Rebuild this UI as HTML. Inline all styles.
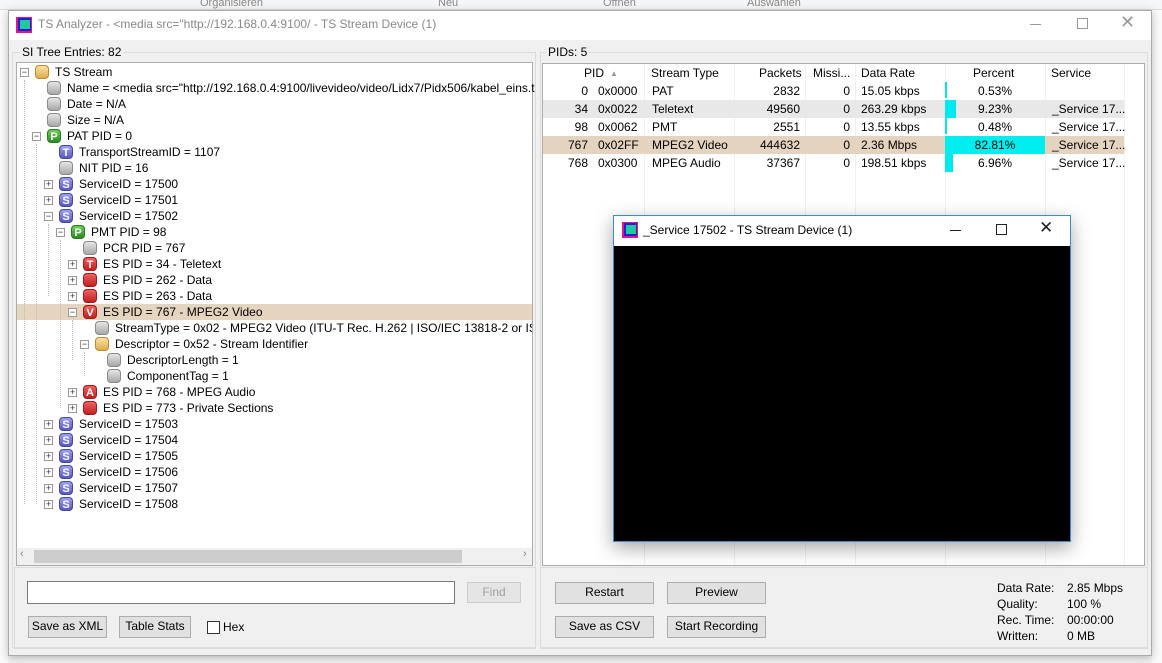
<!DOCTYPE html>
<html><head><meta charset="utf-8">
<style>
*{box-sizing:border-box;margin:0;padding:0}
body{width:1162px;height:663px;overflow:hidden;position:relative;background:#f3f3f3;font-family:"Liberation Sans",sans-serif;font-size:12px;color:#000}
.a{position:absolute}
.r{position:absolute;height:16px;line-height:16px;white-space:nowrap}
.r .e{position:absolute;left:0;top:4px;width:9px;height:9px;border:1px solid #999;background:#fff;font-size:9px;line-height:7px;text-align:center;color:#333}
.r .i{position:absolute;left:15px;top:1px;width:14px;height:14px;border-radius:4px;color:#fff;font-weight:bold;font-size:11px;line-height:14px;text-align:center}
.r .t{position:absolute;left:35px;top:0}
.g{background:linear-gradient(#e6e6e6,#a8a8a8);border:1px solid #888}
.y{background:linear-gradient(#fbe2a6,#e0ac4c);border:1px solid #b88a30}
.p{background:linear-gradient(#6ed05a,#2d8c20);border:1px solid #2a7a20}
.s{background:linear-gradient(#a0a0f0,#5858c0);border:1px solid #4848a0}
.d{background:linear-gradient(#f06060,#c02020);border:1px solid #a01818}
.btn{position:absolute;background:#e1e1e1;border:1px solid #adadad;text-align:center;line-height:19px;font-size:12px}
.hd{position:absolute;top:64px;height:18px;line-height:18px;font-size:12px}
.c{position:absolute;height:18px;line-height:18px}
</style></head><body>
<div class="a" style="left:0;top:0;width:1162px;height:10px;background:#f5f6f7;border-bottom:1px solid #ddd"></div>
<div class="a" style="left:200px;top:-3px;color:#888;font-size:11px">Organisieren</div>
<div class="a" style="left:438px;top:-3px;color:#888;font-size:11px">Neu</div>
<div class="a" style="left:603px;top:-3px;color:#888;font-size:11px">Öffnen</div>
<div class="a" style="left:747px;top:-3px;color:#888;font-size:11px">Auswählen</div>
<div class="a" style="left:0;top:10px;width:8px;height:653px;background:#fafafa"></div>
<div class="a" style="left:1152px;top:10px;width:10px;height:653px;background:#fafafa"></div>
<div class="a" style="left:8px;top:10px;width:1144px;height:646px;background:#f0f0f0;border:1px solid #aaa;box-shadow:0 2px 8px rgba(0,0,0,.25)"></div>
<div class="a" style="left:9px;top:11px;width:1142px;height:29px;background:#fff"></div>
<div class="a" style="left:16px;top:17px;width:16px;height:16px;background:#e0168c"></div>
<div class="a" style="left:18px;top:18px;width:13px;height:13px;background:#2020d0"></div>
<div class="a" style="left:20px;top:20px;width:10px;height:9px;background:#20c8a0"></div>
<div class="a" style="left:38px;top:17px;color:#888;font-size:12px">TS Analyzer - &lt;media src="http://192.168.0.4:9100/ - TS Stream Device (1)</div>
<div class="a" style="left:1030px;top:24px;width:11px;height:1px;background:#999"></div>
<div class="a" style="left:1077px;top:18px;width:11px;height:11px;border:1px solid #999"></div>
<div class="a" style="left:1120px;top:12px;color:#999;font-size:18px">✕</div>

<div class="a" style="left:12px;top:52px;width:524px;height:596px;border:1px solid #dcdcdc"></div>
<div class="a" style="left:20px;top:45px;background:#f0f0f0;padding:0 2px">SI Tree Entries: 82</div>
<div class="a" style="left:16px;top:62px;width:517px;height:504px;background:#fff;border:1px solid #adadad;overflow:hidden">
<div class="a" style="left:0;top:241px;width:515px;height:16px;background:#e5d4c0"></div>
<div class="a" style="left:7px;top:17px;height:424px;border-left:1px dotted #bbb"></div>
<div class="a" style="left:19px;top:81px;height:360px;border-left:1px dotted #bbb"></div>
<div class="a" style="left:31px;top:161px;height:72px;border-left:1px dotted #bbb"></div>
<div class="a" style="left:43px;top:177px;height:168px;border-left:1px dotted #bbb"></div>
<div class="a" style="left:55px;top:257px;height:40px;border-left:1px dotted #bbb"></div>
<div class="a" style="left:67px;top:289px;height:24px;border-left:1px dotted #bbb"></div>
<div class="a" style="left:0;top:485px;width:515px;height:17px;background:#f0f0f0"></div>
<div class="a" style="left:17px;top:487px;width:428px;height:13px;background:#cdcdcd"></div>
<div class="a" style="left:3px;top:485px;color:#888;font-size:11px">‹</div>
<div class="a" style="left:506px;top:485px;color:#888;font-size:11px">›</div>
</div>
<div class="r" style="top:64px;left:20px"><span class="e">−</span><span class="i y"></span><span class="t">TS Stream</span></div>
<div class="r" style="top:80px;left:32px"><span class="i g"></span><span class="t">Name = &lt;media src="http://192.168.0.4:9100/livevideo/video/Lidx7/Pidx506/kabel_eins.t</span></div>
<div class="r" style="top:96px;left:32px"><span class="i g"></span><span class="t">Date = N/A</span></div>
<div class="r" style="top:112px;left:32px"><span class="i g"></span><span class="t">Size = N/A</span></div>
<div class="r" style="top:128px;left:32px"><span class="e">−</span><span class="i p">P</span><span class="t">PAT PID = 0</span></div>
<div class="r" style="top:144px;left:44px"><span class="i s">T</span><span class="t">TransportStreamID = 1107</span></div>
<div class="r" style="top:160px;left:44px"><span class="i g"></span><span class="t">NIT PID = 16</span></div>
<div class="r" style="top:176px;left:44px"><span class="e">+</span><span class="i s">S</span><span class="t">ServiceID = 17500</span></div>
<div class="r" style="top:192px;left:44px"><span class="e">+</span><span class="i s">S</span><span class="t">ServiceID = 17501</span></div>
<div class="r" style="top:208px;left:44px"><span class="e">−</span><span class="i s">S</span><span class="t">ServiceID = 17502</span></div>
<div class="r" style="top:224px;left:56px"><span class="e">−</span><span class="i p">P</span><span class="t">PMT PID = 98</span></div>
<div class="r" style="top:240px;left:68px"><span class="i g"></span><span class="t">PCR PID = 767</span></div>
<div class="r" style="top:256px;left:68px"><span class="e">+</span><span class="i d">T</span><span class="t">ES PID = 34 - Teletext</span></div>
<div class="r" style="top:272px;left:68px"><span class="e">+</span><span class="i d"></span><span class="t">ES PID = 262 - Data</span></div>
<div class="r" style="top:288px;left:68px"><span class="e">+</span><span class="i d"></span><span class="t">ES PID = 263 - Data</span></div>
<div class="r" style="top:304px;left:68px"><span class="e">−</span><span class="i d">V</span><span class="t">ES PID = 767 - MPEG2 Video</span></div>
<div class="r" style="top:320px;left:80px;width:452px;overflow:hidden"><span class="i g"></span><span class="t">StreamType = 0x02 - MPEG2 Video (ITU-T Rec. H.262 | ISO/IEC 13818-2 or ISO/IEC</span></div>
<div class="r" style="top:336px;left:80px"><span class="e">−</span><span class="i y"></span><span class="t">Descriptor = 0x52 - Stream Identifier</span></div>
<div class="r" style="top:352px;left:92px"><span class="i g"></span><span class="t">DescriptorLength = 1</span></div>
<div class="r" style="top:368px;left:92px"><span class="i g"></span><span class="t">ComponentTag = 1</span></div>
<div class="r" style="top:384px;left:68px"><span class="e">+</span><span class="i d">A</span><span class="t">ES PID = 768 - MPEG Audio</span></div>
<div class="r" style="top:400px;left:68px"><span class="e">+</span><span class="i d"></span><span class="t">ES PID = 773 - Private Sections</span></div>
<div class="r" style="top:416px;left:44px"><span class="e">+</span><span class="i s">S</span><span class="t">ServiceID = 17503</span></div>
<div class="r" style="top:432px;left:44px"><span class="e">+</span><span class="i s">S</span><span class="t">ServiceID = 17504</span></div>
<div class="r" style="top:448px;left:44px"><span class="e">+</span><span class="i s">S</span><span class="t">ServiceID = 17505</span></div>
<div class="r" style="top:464px;left:44px"><span class="e">+</span><span class="i s">S</span><span class="t">ServiceID = 17506</span></div>
<div class="r" style="top:480px;left:44px"><span class="e">+</span><span class="i s">S</span><span class="t">ServiceID = 17507</span></div>
<div class="r" style="top:496px;left:44px"><span class="e">+</span><span class="i s">S</span><span class="t">ServiceID = 17508</span></div>

<div class="a" style="left:14px;top:567px;width:522px;height:82px;border:1px solid #dcdcdc"></div>
<div class="a" style="left:27px;top:581px;width:428px;height:23px;background:#fff;border:1px solid #7a7a7a"></div>
<div class="btn" style="left:467px;top:582px;width:54px;height:21px;color:#a0a0a0;border-color:#ccc;background:#e5e5e5">Find</div>
<div class="btn" style="left:28px;top:616px;width:79px;height:22px">Save as XML</div>
<div class="btn" style="left:119px;top:616px;width:72px;height:22px">Table Stats</div>
<div class="a" style="left:207px;top:621px;width:13px;height:13px;border:1px solid #333;background:#fff"></div>
<div class="a" style="left:223px;top:620px">Hex</div>

<div class="a" style="left:540px;top:52px;width:608px;height:596px;border:1px solid #dcdcdc"></div>
<div class="a" style="left:546px;top:45px;background:#f0f0f0;padding:0 2px">PIDs: 5</div>
<div class="a" style="left:542px;top:63px;width:603px;height:503px;background:#fff;border:1px solid #adadad"></div>
<div class="a" style="left:644px;top:64px;width:1px;height:500px;background:#f0f0f0"></div>
<div class="a" style="left:734px;top:64px;width:1px;height:500px;background:#f0f0f0"></div>
<div class="a" style="left:805px;top:64px;width:1px;height:500px;background:#f0f0f0"></div>
<div class="a" style="left:855px;top:64px;width:1px;height:500px;background:#f0f0f0"></div>
<div class="a" style="left:945px;top:64px;width:1px;height:500px;background:#f0f0f0"></div>
<div class="a" style="left:1045px;top:64px;width:1px;height:500px;background:#f0f0f0"></div>
<div class="a" style="left:1124px;top:64px;width:1px;height:500px;background:#f0f0f0"></div>
<div class="hd" style="left:584px">PID</div>
<div class="a" style="left:610px;top:69px;font-size:8px;color:#999">▲</div>
<div class="hd" style="left:651px">Stream Type</div>
<div class="hd" style="left:759px">Packets</div>
<div class="hd" style="left:813px">Missi...</div>
<div class="hd" style="left:861px">Data Rate</div>
<div class="hd" style="left:973px">Percent</div>
<div class="hd" style="left:1051px">Service</div>
<div class="a" style="left:543px;top:100px;width:581px;height:18px;background:#e8e8e8"></div>
<div class="a" style="left:543px;top:136px;width:581px;height:18px;background:#e3d3bf"></div>
<div class="a" style="left:945px;top:82px;width:2px;height:16px;background:#00e8f0"></div>
<div class="a" style="left:945px;top:100px;width:11px;height:18px;background:#00e8f0"></div>
<div class="a" style="left:945px;top:118px;width:2px;height:16px;background:#00e8f0"></div>
<div class="a" style="left:945px;top:136px;width:100px;height:18px;background:#00eef0"></div>
<div class="a" style="left:945px;top:154px;width:8px;height:18px;background:#00e8f0"></div>

<div class="c" style="top:82px;left:544px;width:44px;text-align:right">0</div><div class="c" style="top:82px;left:598px">0x0000</div><div class="c" style="top:82px;left:652px">PAT</div><div class="c" style="top:82px;left:734px;width:66px;text-align:right">2832</div><div class="c" style="top:82px;left:805px;width:45px;text-align:right">0</div><div class="c" style="top:82px;left:861px">15.05 kbps</div><div class="c" style="top:82px;left:945px;width:100px;text-align:center">0.53%</div>
<div class="c" style="top:100px;left:544px;width:44px;text-align:right">34</div><div class="c" style="top:100px;left:598px">0x0022</div><div class="c" style="top:100px;left:652px">Teletext</div><div class="c" style="top:100px;left:734px;width:66px;text-align:right">49560</div><div class="c" style="top:100px;left:805px;width:45px;text-align:right">0</div><div class="c" style="top:100px;left:861px">263.29 kbps</div><div class="c" style="top:100px;left:945px;width:100px;text-align:center">9.23%</div><div class="c" style="top:100px;left:1052px">_Service 17...</div>
<div class="c" style="top:118px;left:544px;width:44px;text-align:right">98</div><div class="c" style="top:118px;left:598px">0x0062</div><div class="c" style="top:118px;left:652px">PMT</div><div class="c" style="top:118px;left:734px;width:66px;text-align:right">2551</div><div class="c" style="top:118px;left:805px;width:45px;text-align:right">0</div><div class="c" style="top:118px;left:861px">13.55 kbps</div><div class="c" style="top:118px;left:945px;width:100px;text-align:center">0.48%</div><div class="c" style="top:118px;left:1052px">_Service 17...</div>
<div class="c" style="top:136px;left:544px;width:44px;text-align:right">767</div><div class="c" style="top:136px;left:598px">0x02FF</div><div class="c" style="top:136px;left:652px">MPEG2 Video</div><div class="c" style="top:136px;left:734px;width:66px;text-align:right">444632</div><div class="c" style="top:136px;left:805px;width:45px;text-align:right">0</div><div class="c" style="top:136px;left:861px">2.36 Mbps</div><div class="c" style="top:136px;left:945px;width:100px;text-align:center">82.81%</div><div class="c" style="top:136px;left:1052px">_Service 17...</div>
<div class="c" style="top:154px;left:544px;width:44px;text-align:right">768</div><div class="c" style="top:154px;left:598px">0x0300</div><div class="c" style="top:154px;left:652px">MPEG Audio</div><div class="c" style="top:154px;left:734px;width:66px;text-align:right">37367</div><div class="c" style="top:154px;left:805px;width:45px;text-align:right">0</div><div class="c" style="top:154px;left:861px">198.51 kbps</div><div class="c" style="top:154px;left:945px;width:100px;text-align:center">6.96%</div><div class="c" style="top:154px;left:1052px">_Service 17...</div>

<div class="a" style="left:540px;top:567px;width:608px;height:82px;border:1px solid #dcdcdc"></div>
<div class="btn" style="left:555px;top:582px;width:99px;height:22px">Restart</div>
<div class="btn" style="left:667px;top:582px;width:99px;height:22px">Preview</div>
<div class="btn" style="left:555px;top:616px;width:99px;height:22px">Save as CSV</div>
<div class="btn" style="left:667px;top:616px;width:99px;height:22px">Start Recording</div>
<div class="a" style="left:997px;top:580px;line-height:16px">Data Rate:<br>Quality:<br>Rec. Time:<br>Written:</div>
<div class="a" style="left:1067px;top:580px;line-height:16px">2.85 Mbps<br>100 %<br>00:00:00<br>0 MB</div>

<div class="a" style="left:613px;top:215px;width:458px;height:327px;background:#000;border:1px solid #3c8ad6;box-shadow:0 6px 18px rgba(0,0,0,.35)"></div>
<div class="a" style="left:614px;top:216px;width:456px;height:30px;background:#fff"></div>
<div class="a" style="left:622px;top:222px;width:16px;height:16px;background:#e0168c"></div>
<div class="a" style="left:624px;top:223px;width:13px;height:13px;background:#2020d0"></div>
<div class="a" style="left:626px;top:225px;width:10px;height:9px;background:#20c8a0"></div>
<div class="a" style="left:643px;top:223px;font-size:12px">_Service 17502 - TS Stream Device (1)</div>
<div class="a" style="left:950px;top:230px;width:11px;height:1px;background:#222"></div>
<div class="a" style="left:996px;top:224px;width:11px;height:11px;border:1px solid #222"></div>
<div class="a" style="left:1039px;top:218px;font-size:17px;color:#222">✕</div>
</body></html>
